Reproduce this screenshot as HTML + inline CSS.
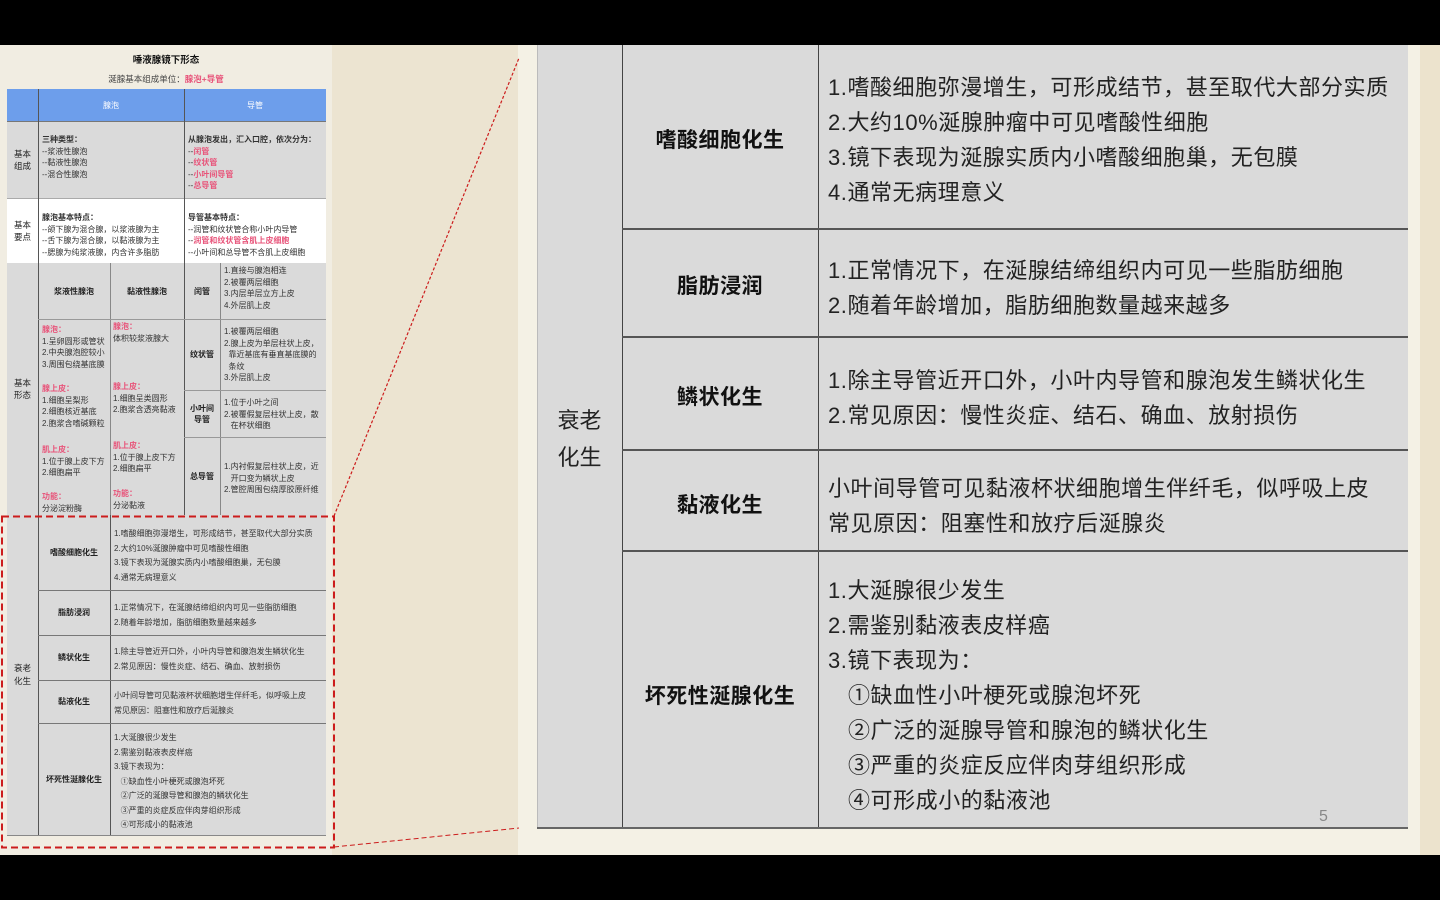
<!DOCTYPE html>
<html><head><meta charset="utf-8">
<style>
*{margin:0;padding:0;box-sizing:border-box}
body{width:1440px;height:900px;background:#000;position:relative;overflow:hidden;font-family:"Liberation Sans","Noto Sans CJK SC",sans-serif;color:#222}
.a{position:absolute}
.c{position:absolute;display:flex;align-items:center;justify-content:center;text-align:center}
.t{position:absolute;font-size:8px;line-height:11.6px;color:#333;white-space:nowrap}
.p{color:#e8547a}
.b{font-weight:bold}
.vl{position:absolute;width:1px;background:#555}
.hl{position:absolute;height:1px;background:#777}
.R{position:absolute;font-size:22px;line-height:35px;color:#222;white-space:nowrap;letter-spacing:0.55px}
.RN{position:absolute;font-size:21px;font-weight:bold;display:flex;align-items:center;justify-content:center;color:#111;letter-spacing:0.5px}
.in{padding-left:20px}
</style></head><body>
<div class="a" style="left:0;top:45px;width:1440px;height:810px;background:#ece4d1"></div>
<div class="a" style="left:0;top:45px;width:332px;height:810px;background:#f1ede2"></div>
<div class="a" style="left:518px;top:45px;width:922px;height:810px;background:#f4f1e5"></div>
<div class="a" style="left:1420px;top:45px;width:20px;height:810px;background:#ece3cd"></div>

<!-- LEFT PANEL -->
<div class="c b" style="left:0;top:52px;width:332px;height:14px;font-size:9.5px;color:#111">唾液腺镜下形态</div>
<div class="c" style="left:0;top:72px;width:332px;height:14px;font-size:8.5px;color:#444">涎腺基本组成单位：<span class="p b">腺泡+导管</span></div>
<div class="a" style="left:7px;top:89px;width:319px;height:32px;background:#6d9eeb"></div>
<div class="c" style="left:38px;top:89px;width:146px;height:32px;font-size:8px;color:#fff">腺泡</div>
<div class="c" style="left:184px;top:89px;width:142px;height:32px;font-size:8px;color:#fff">导管</div>
<div class="a" style="left:7px;top:121px;width:319px;height:77px;background:#dadada"></div>
<div class="a" style="left:7px;top:198px;width:319px;height:65px;background:#fff"></div>
<div class="a" style="left:7px;top:263px;width:319px;height:572px;background:#dadada"></div>
<div class="hl" style="left:7px;top:121px;width:319px"></div>
<div class="hl" style="left:7px;top:198px;width:319px;background:#aaa"></div>
<div class="vl" style="left:38px;top:89px;height:746px"></div>
<div class="vl" style="left:184px;top:89px;height:426px"></div>
<div class="vl" style="left:110px;top:263px;height:252px;background:#888"></div>
<div class="vl" style="left:220px;top:263px;height:252px;background:#888"></div>
<div class="hl" style="left:38px;top:319px;width:146px;background:#999"></div>
<div class="hl" style="left:184px;top:319px;width:142px;background:#999"></div>
<div class="hl" style="left:184px;top:390px;width:142px;background:#999"></div>
<div class="hl" style="left:184px;top:437px;width:142px;background:#999"></div>
<div class="vl" style="left:110px;top:515px;height:320px"></div>
<div class="hl" style="left:38px;top:590px;width:288px"></div>
<div class="hl" style="left:38px;top:635px;width:288px"></div>
<div class="hl" style="left:38px;top:680px;width:288px"></div>
<div class="hl" style="left:38px;top:723px;width:288px"></div>
<div class="hl" style="left:7px;top:835px;width:319px;background:#888"></div>

<div class="c" style="left:7px;top:121px;width:31px;height:77px;font-size:8.5px;line-height:12px">基本<br>组成</div>
<div class="c" style="left:7px;top:198px;width:31px;height:65px;font-size:8.5px;line-height:12px">基本<br>要点</div>
<div class="c" style="left:7px;top:263px;width:31px;height:252px;font-size:8.5px;line-height:12px">基本<br>形态</div>
<div class="c" style="left:7px;top:515px;width:31px;height:320px;font-size:8.5px;line-height:13px">衰老<br>化生</div>

<div class="t" style="left:42px;top:134px"><b>三种类型：</b><br>--浆液性腺泡<br>--黏液性腺泡<br>--混合性腺泡</div>
<div class="t" style="left:188px;top:134px"><b>从腺泡发出，汇入口腔，依次分为：</b><br>--<span class="p b">闰管</span><br>--<span class="p b">纹状管</span><br>--<span class="p b">小叶间导管</span><br>--<span class="p b">总导管</span></div>
<div class="t" style="left:42px;top:212px"><b>腺泡基本特点：</b><br>--颌下腺为混合腺，以浆液腺为主<br>--舌下腺为混合腺，以黏液腺为主<br>--腮腺为纯浆液腺，内含许多脂肪</div>
<div class="t" style="left:188px;top:212px"><b>导管基本特点：</b><br>--润管和纹状管合称小叶内导管<br>--<span class="p b">润管和纹状管含肌上皮细胞</span><br>--小叶间和总导管不含肌上皮细胞</div>

<div class="c b" style="left:38px;top:263px;width:72px;height:56px;font-size:8px">浆液性腺泡</div>
<div class="c b" style="left:110px;top:263px;width:74px;height:56px;font-size:8px">黏液性腺泡</div>
<div class="t" style="left:42px;top:324px"><span class="p b">腺泡：</span><br>1.呈卵圆形或管状<br>2.中央腺泡腔较小<br>3.周围包绕基底膜</div>
<div class="t" style="left:42px;top:383px"><span class="p b">腺上皮：</span><br>1.细胞呈梨形<br>2.细胞核近基底<br>2.胞浆含嗜碱颗粒</div>
<div class="t" style="left:42px;top:444px"><span class="p b">肌上皮：</span><br>1.位于腺上皮下方<br>2.细胞扁平</div>
<div class="t" style="left:42px;top:491px"><span class="p b">功能：</span><br>分泌淀粉酶</div>
<div class="t" style="left:113px;top:321px"><span class="p b">腺泡：</span><br>体积较浆液腺大</div>
<div class="t" style="left:113px;top:381px"><span class="p b">腺上皮：</span><br>1.细胞呈类圆形<br>2.胞浆含透亮黏液</div>
<div class="t" style="left:113px;top:440px"><span class="p b">肌上皮：</span><br>1.位于腺上皮下方<br>2.细胞扁平</div>
<div class="t" style="left:113px;top:488px"><span class="p b">功能：</span><br>分泌黏液</div>

<div class="c b" style="left:184px;top:263px;width:36px;height:56px;font-size:8px">闰管</div>
<div class="c b" style="left:184px;top:319px;width:36px;height:71px;font-size:8px">纹状管</div>
<div class="c b" style="left:184px;top:390px;width:36px;height:47px;font-size:8px;line-height:11px">小叶间<br>导管</div>
<div class="c b" style="left:184px;top:437px;width:36px;height:78px;font-size:8px">总导管</div>
<div class="t" style="left:224px;top:265px">1.直接与腺泡相连<br>2.被覆两层细胞<br>3.内层单层立方上皮<br>4.外层肌上皮</div>
<div class="t" style="left:224px;top:326px">1.被覆两层细胞<br>2.腺上皮为单层柱状上皮，<br>&nbsp;&nbsp;靠近基底有垂直基底膜的<br>&nbsp;&nbsp;条纹<br>3.外层肌上皮</div>
<div class="t" style="left:224px;top:397px">1.位于小叶之间<br>2.被覆假复层柱状上皮，散<br>&nbsp;&nbsp;&nbsp;在杯状细胞</div>
<div class="t" style="left:224px;top:461px">1.内衬假复层柱状上皮，近<br>&nbsp;&nbsp;&nbsp;开口变为鳞状上皮<br>2.管腔周围包绕厚胶原纤维</div>

<div class="c b" style="left:38px;top:515px;width:72px;height:75px;font-size:8px">嗜酸细胞化生</div>
<div class="c b" style="left:38px;top:590px;width:72px;height:45px;font-size:8px">脂肪浸润</div>
<div class="c b" style="left:38px;top:635px;width:72px;height:45px;font-size:8px">鳞状化生</div>
<div class="c b" style="left:38px;top:680px;width:72px;height:43px;font-size:8px">黏液化生</div>
<div class="c b" style="left:38px;top:723px;width:72px;height:112px;font-size:8px">坏死性涎腺化生</div>
<div class="t" style="left:114px;top:527px;line-height:14.5px">1.嗜酸细胞弥漫增生，可形成结节，甚至取代大部分实质<br>2.大约10%涎腺肿瘤中可见嗜酸性细胞<br>3.镜下表现为涎腺实质内小嗜酸细胞巢，无包膜<br>4.通常无病理意义</div>
<div class="t" style="left:114px;top:601px;line-height:14.5px">1.正常情况下，在涎腺结缔组织内可见一些脂肪细胞<br>2.随着年龄增加，脂肪细胞数量越来越多</div>
<div class="t" style="left:114px;top:645px;line-height:14.5px">1.除主导管近开口外，小叶内导管和腺泡发生鳞状化生<br>2.常见原因：慢性炎症、结石、确血、放射损伤</div>
<div class="t" style="left:114px;top:689px;line-height:14.5px">小叶间导管可见黏液杯状细胞增生伴纤毛，似呼吸上皮<br>常见原因：阻塞性和放疗后涎腺炎</div>
<div class="t" style="left:114px;top:731px;line-height:14.5px">1.大涎腺很少发生<br>2.需鉴别黏液表皮样癌<br>3.镜下表现为：<br>&nbsp;&nbsp;&nbsp;①缺血性小叶梗死或腺泡坏死<br>&nbsp;&nbsp;&nbsp;②广泛的涎腺导管和腺泡的鳞状化生<br>&nbsp;&nbsp;&nbsp;③严重的炎症反应伴肉芽组织形成<br>&nbsp;&nbsp;&nbsp;④可形成小的黏液池</div>

<svg class="a" style="left:0;top:0" width="1440" height="900">
<rect x="2" y="516.5" width="332" height="331" fill="none" stroke="#cc1c1c" stroke-width="2" stroke-dasharray="7,4"/>
<line x1="334" y1="516" x2="519" y2="58" stroke="#cc1c1c" stroke-width="1.2" stroke-dasharray="3,2"/>
<line x1="334" y1="847" x2="519" y2="828" stroke="#cc1c1c" stroke-width="1" stroke-dasharray="5,3"/>
</svg>

<!-- RIGHT TABLE -->
<div class="a" style="left:537px;top:45px;width:871px;height:783px;background:#dadada;border-left:1px solid #bbb"></div>
<div class="vl" style="left:622px;top:45px;height:783px;background:#444"></div>
<div class="vl" style="left:818px;top:45px;height:783px;background:#444"></div>
<div class="hl" style="left:622px;top:228px;width:786px;height:2px;background:#555"></div>
<div class="hl" style="left:622px;top:336px;width:786px;height:2px;background:#555"></div>
<div class="hl" style="left:622px;top:449px;width:786px;height:2px;background:#555"></div>
<div class="hl" style="left:622px;top:550px;width:786px;height:2px;background:#555"></div>
<div class="hl" style="left:537px;top:827px;width:871px;height:2px;background:#666"></div>

<div class="c" style="left:537px;top:45px;width:85px;height:783px;font-size:22px;line-height:37px;color:#222;padding-top:4px">衰老<br>化生</div>
<div class="RN" style="left:622px;top:45px;width:196px;height:184px;padding-top:4px">嗜酸细胞化生</div>
<div class="RN" style="left:622px;top:229px;width:196px;height:108px;padding-top:4px">脂肪浸润</div>
<div class="RN" style="left:622px;top:337px;width:196px;height:113px;padding-top:4px">鳞状化生</div>
<div class="RN" style="left:622px;top:450px;width:196px;height:101px;padding-top:6px">黏液化生</div>
<div class="RN" style="left:622px;top:551px;width:196px;height:277px;padding-top:10px">坏死性涎腺化生</div>

<div class="R" style="left:828px;top:70px">1.嗜酸细胞弥漫增生，可形成结节，甚至取代大部分实质<br>2.大约10%涎腺肿瘤中可见嗜酸性细胞<br>3.镜下表现为涎腺实质内小嗜酸细胞巢，无包膜<br>4.通常无病理意义</div>
<div class="R" style="left:828px;top:253px">1.正常情况下，在涎腺结缔组织内可见一些脂肪细胞<br>2.随着年龄增加，脂肪细胞数量越来越多</div>
<div class="R" style="left:828px;top:363px">1.除主导管近开口外，小叶内导管和腺泡发生鳞状化生<br>2.常见原因：慢性炎症、结石、确血、放射损伤</div>
<div class="R" style="left:828px;top:471px">小叶间导管可见黏液杯状细胞增生伴纤毛，似呼吸上皮<br>常见原因：阻塞性和放疗后涎腺炎</div>
<div class="R" style="left:828px;top:573px">1.大涎腺很少发生<br>2.需鉴别黏液表皮样癌<br>3.镜下表现为：<div class="in">①缺血性小叶梗死或腺泡坏死</div><div class="in">②广泛的涎腺导管和腺泡的鳞状化生</div><div class="in">③严重的炎症反应伴肉芽组织形成</div><div class="in">④可形成小的黏液池</div></div>
<div class="a" style="left:1319px;top:808px;font-size:16px;color:#888">5</div>
</body></html>
